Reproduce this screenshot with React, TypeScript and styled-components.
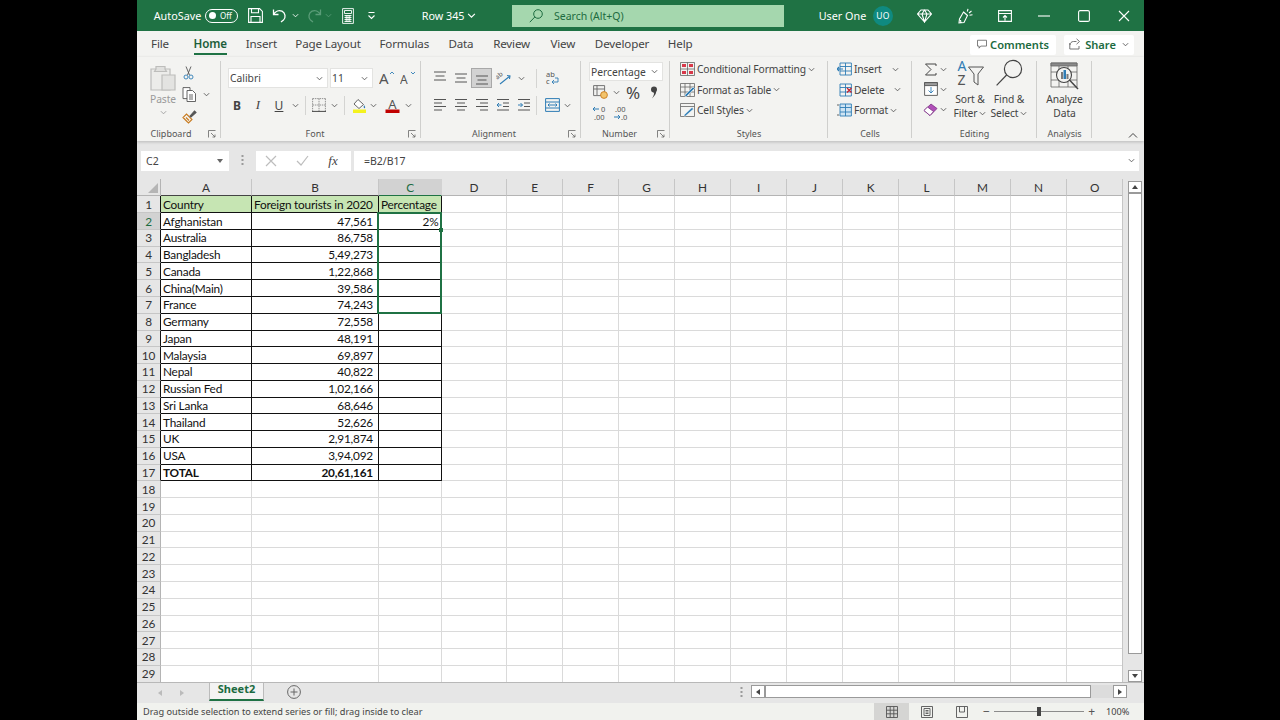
import React from 'react';
import styled, { createGlobalStyle } from 'styled-components';

const GlobalStyle = createGlobalStyle`
  html, body { margin: 0; padding: 0; background: #000; }
  * { box-sizing: border-box; }
  svg { display: block; flex: none; }
`;

const UI_FONT = `"Noto Sans", "Open Sans", sans-serif`;
const CELL_FONT = `Lato, "Noto Sans", sans-serif`;
const GREEN = '#1f7244';

const Page = styled.div`
  width: 1280px;
  height: 720px;
  padding-left: 137px;
  overflow: hidden;
  background: #000;
`;

const Win = styled.div`
  width: 1007px;
  height: 720px;
  display: flex;
  flex-direction: column;
  background: #e6e6e6;
  font-family: ${UI_FONT};
  color: #444;
`;

/* title bar */
const TitleBar = styled.div`
  height: 31px;
  flex: none;
  display: flex;
  align-items: center;
  padding-left: 18px;
  background: ${GREEN};
  color: #fff;
  font-size: 10.8px;
`;

const TitleItem = styled.div<{ $w: number; $ml?: number }>`
  width: ${p => p.$w}px;
  margin-left: ${p => p.$ml ?? 0}px;
  flex: none;
  display: flex;
  align-items: center;
  justify-content: center;
  white-space: nowrap;
`;

const Toggle = styled.div`
  width: 33px;
  height: 14px;
  border: 1px solid #fff;
  border-radius: 7px;
  display: flex;
  align-items: center;
  gap: 4px;
  padding-left: 3px;
  font-size: 8px;
  &::before {
    content: '';
    width: 7px;
    height: 7px;
    border-radius: 50%;
    background: #fff;
  }
`;

const SearchBox = styled.div`
  width: 272px;
  height: 22px;
  margin-left: 36px;
  flex: none;
  display: flex;
  align-items: center;
  gap: 11px;
  padding-left: 17px;
  background: #a5d7ae;
  color: #1d6b40;
  font-size: 10.5px;
`;

const Avatar = styled.div`
  width: 20px;
  height: 20px;
  margin-left: 9px;
  flex: none;
  border-radius: 50%;
  background: #0f8a80;
  display: flex;
  align-items: center;
  justify-content: center;
  font-size: 8.5px;
  letter-spacing: 0.3px;
`;

/* tab row */
const TabRow = styled.div`
  height: 26px;
  flex: none;
  display: flex;
  align-items: flex-start;
  gap: 19.7px;
  padding: 4px 10px 0 15px;
  background: #f3f3f1;
`;

const Tab = styled.div<{ $active?: boolean; $w: number }>`
  width: ${p => p.$w}px;
  height: 20px;
  flex: none;
  display: flex;
  justify-content: center;
  margin-left: ${p => (p.$active ? 6 : 0)}px;
  font-size: 11.6px;
  letter-spacing: -0.15px;
  line-height: 18px;
  white-space: nowrap;
  font-weight: ${p => (p.$active ? 600 : 400)};
  color: ${p => (p.$active ? '#1c5e3a' : '#444')};
  border-bottom: 2px solid ${p => (p.$active ? GREEN : 'transparent')};
`;

const TabActions = styled.div`
  margin-left: auto;
  display: flex;
  gap: 8px;
`;

const ActionButton = styled.div<{ $w: number }>`
  width: ${p => p.$w}px;
  height: 20px;
  display: flex;
  align-items: center;
  justify-content: center;
  gap: 3px;
  padding-bottom: 2px;
  background: #fff;
  border-radius: 2px;
  color: #1c6b41;
  font-size: 11.1px;
  font-weight: 600;
`;

/* ribbon */
const Ribbon = styled.div`
  height: 84px;
  flex: none;
  display: flex;
  position: relative;
  background: #f3f3f1;
  box-shadow: 0 1px 3px rgba(0, 0, 0, 0.2);
`;

const Group = styled.div<{ $w: number }>`
  width: ${p => p.$w}px;
  height: 84px;
  flex: none;
  position: relative;
  display: flex;
  flex-direction: column;
  &::after {
    content: '';
    position: absolute;
    right: 0;
    top: 4px;
    bottom: 3px;
    width: 1px;
    background: #cfcfcd;
  }
`;

const GroupBody = styled.div<{ $pl?: number; $pt?: number }>`
  height: 70px;
  flex: none;
  display: flex;
  overflow: visible;
  padding: ${p => p.$pt ?? 0}px 0 0 ${p => p.$pl ?? 0}px;
`;

const GroupLabel = styled.div<{ $pr?: number }>`
  height: 14px;
  flex: none;
  padding-right: ${p => p.$pr ?? 0}px;
  text-align: center;
  font-size: 9px;
  line-height: 14px;
  color: #555;
`;

const Launcher = styled.div`
  position: absolute;
  right: 5px;
  bottom: 3px;
`;

const Stack = styled.div<{ $gap?: number; $w?: number }>`
  display: flex;
  flex-direction: column;
  gap: ${p => p.$gap ?? 0}px;
  ${p => (p.$w ? `width: ${p.$w}px; flex: none;` : '')}
`;

const Row = styled.div<{ $h?: number }>`
  display: flex;
  align-items: center;
  height: ${p => p.$h ?? 20}px;
`;

const Cell = styled.div<{ $w: number; $on?: boolean; $ml?: number }>`
  width: ${p => p.$w}px;
  height: 100%;
  flex: none;
  margin-left: ${p => p.$ml ?? 0}px;
  display: flex;
  align-items: center;
  justify-content: center;
  font-size: 11px;
  ${p => (p.$on ? 'background: #d2d2d2; border: 1px solid #a8a8a8;' : '')}
`;

const PercentCell = styled(Cell)`
  font-size: 17px;
`;

const FxCell = styled(Cell)`
  font-family: "Liberation Serif", serif;
  font-style: italic;
  font-size: 13px;
`;

const BoldGlyph = styled.span`
  font-weight: 700;
  font-size: 12px;
`;

const ItalicGlyph = styled.span`
  font-family: "Liberation Serif", serif;
  font-style: italic;
  font-size: 13px;
`;

const UnderGlyph = styled.span`
  text-decoration: underline;
  font-size: 12px;
`;

const Divider = styled.div<{ $ml: number; $mr: number }>`
  width: 1px;
  height: 19px;
  flex: none;
  margin: 0 ${p => p.$mr}px 0 ${p => p.$ml}px;
  background: #d4d4d2;
`;

const Combo = styled.div<{ $w: number; $h?: number; $ml?: number }>`
  width: ${p => p.$w}px;
  height: ${p => p.$h ?? 20}px;
  margin-left: ${p => p.$ml ?? 0}px;
  flex: none;
  display: flex;
  align-items: center;
  justify-content: space-between;
  padding: 0 4px 0 1px;
  background: #fff;
  border: 1px solid #e3e3e1;
  font-size: 10.3px;
  color: #444;
`;

const BigLabel = styled.div<{ $mt?: number; $dim?: boolean }>`
  display: flex;
  align-items: center;
  gap: 2px;
  margin-top: ${p => p.$mt ?? 0}px;
  font-size: 10.3px;
  letter-spacing: -0.1px;
  line-height: 14px;
  color: ${p => (p.$dim ? '#9a9a9a' : '#444')};
  white-space: nowrap;
`;

const PasteChev = styled.div`
  margin-top: 3px;
`;

const ListRow = styled.div`
  display: flex;
  align-items: center;
  height: 20px;
  gap: 2px;
  font-size: 10.3px;
  letter-spacing: -0.15px;
  color: #444;
  white-space: nowrap;
`;

const RowChev = styled.div<{ $ml: number }>`
  margin-left: ${p => p.$ml}px;
`;

const Collapse = styled.div`
  position: absolute;
  right: 6px;
  bottom: 2px;
`;

const BigButton = styled.div<{ $w: number }>`
  width: ${p => p.$w}px;
  flex: none;
  display: flex;
  flex-direction: column;
  align-items: center;
`;

/* formula bar */
const FormulaBar = styled.div`
  height: 38px;
  flex: none;
  display: flex;
  align-items: center;
  padding: 1px 5px 0 4px;
  font-size: 10.5px;
`;

const NameBox = styled.div`
  width: 88px;
  height: 20px;
  flex: none;
  display: flex;
  align-items: center;
  justify-content: space-between;
  padding: 0 5px;
  background: #fff;
`;

const BarDots = styled.div`
  width: 27px;
  flex: none;
  display: flex;
  justify-content: center;
`;

const FxBox = styled.div`
  width: 95px;
  height: 20px;
  flex: none;
  display: flex;
  align-items: center;
  background: #fff;
`;

const FormulaInput = styled.div`
  flex: 1;
  height: 20px;
  margin-left: 3px;
  display: flex;
  align-items: center;
  justify-content: space-between;
  padding: 0 4px 0 10px;
  background: #fff;
  font-size: 10.5px;
`;

/* sheet */
const SheetArea = styled.div`
  height: 503px;
  flex: none;
  display: flex;
  background: #fff;
`;

const SheetGrid = styled.div`
  width: 985px;
  height: 503px;
  flex: none;
  position: relative;
  display: grid;
  grid-template-columns: 24px 91px 127px 63px 65px 56px 56px 56px 56px 56px 56px 56px 56px 56px 56px 56px;
  grid-template-rows: 17.4px repeat(29, 16.78px);
  overflow: hidden;
  font-family: ${CELL_FONT};
  font-size: 11.8px;
  letter-spacing: -0.2px;
  color: #111;
`;

const Corner = styled.div`
  background: #e6e6e6;
  border-right: 1px solid #b4b4b4;
  border-bottom: 1px solid #b4b4b4;
  position: relative;
  &::after {
    content: '';
    position: absolute;
    right: 2px;
    bottom: 2px;
    border-style: solid;
    border-width: 0 0 10px 10px;
    border-color: transparent transparent #b5b5b5 transparent;
  }
`;

const ColHead = styled.div<{ $on?: boolean; $boxed?: boolean }>`
  display: flex;
  align-items: center;
  justify-content: center;
  background: ${p => (p.$on ? '#d2d2d2' : '#e6e6e6')};
  color: ${p => (p.$on ? '#1c6b41' : '#333')};
  border-right: 1px solid ${p => (p.$on ? '#d2d2d2' : '#c6c6c6')};
  border-bottom: 1px solid ${p => (p.$on ? GREEN : p.$boxed ? '#444' : '#b4b4b4')};
`;

const RowHead = styled.div<{ $on?: boolean; $edge?: boolean }>`
  display: flex;
  align-items: center;
  justify-content: center;
  background: ${p => (p.$on ? '#d2d2d2' : '#e6e6e6')};
  color: ${p => (p.$on ? '#1c6b41' : '#333')};
  border-right: 1px solid ${p => (p.$edge ? '#111' : '#b4b4b4')};
  border-bottom: 1px solid #c6c6c6;
`;

const DataCell = styled.div<{ $boxed?: boolean; $right?: boolean; $head?: boolean; $bold?: boolean; $tight?: boolean }>`
  display: flex;
  align-items: center;
  justify-content: ${p => (p.$right ? 'flex-end' : 'flex-start')};
  padding: 0 ${p => (p.$tight ? 2.5 : 5)}px 0 2px;
  white-space: nowrap;
  overflow: hidden;
  font-weight: ${p => (p.$bold ? 700 : 400)};
  background: ${p => (p.$head ? '#c6e5b3' : '#fff')};
  border-right: 1px solid ${p => (p.$boxed ? '#111' : '#dadada')};
  border-bottom: 1px solid ${p => (p.$boxed ? '#111' : '#dadada')};
`;

const Selection = styled.div`
  position: absolute;
  left: 240px;
  top: 33px;
  width: 65px;
  height: 102px;
  border: 2px solid ${GREEN};
  pointer-events: none;
  &::after {
    content: '';
    position: absolute;
    right: -3px;
    top: 14px;
    width: 4px;
    height: 4px;
    background: ${GREEN};
  }
`;

const VScroll = styled.div`
  flex: 1;
  display: flex;
  flex-direction: column;
  align-items: center;
  padding: 2px 2px 0 5px;
  background: #e6e6e6;
  border-left: 1px solid #c6c6c6;
`;

const ScrollBtn = styled.div`
  width: 14px;
  height: 12px;
  flex: none;
  display: flex;
  align-items: center;
  justify-content: center;
  background: #fff;
  border: 1px solid #9a9a9a;
`;

const VThumb = styled.div`
  width: 14px;
  height: 461px;
  flex: none;
  background: #fff;
  border: 1px solid #9a9a9a;
`;

const VGap = styled.div`
  flex: 1;
`;

/* bottom */
const SheetTabs = styled.div`
  height: 21px;
  flex: none;
  display: flex;
  align-items: flex-start;
  background: #e6e6e6;
  border-top: 1px solid #b8b8b8;
`;

const TabArrows = styled.div`
  width: 72px;
  height: 20px;
  flex: none;
  display: flex;
  align-items: center;
  gap: 14px;
  padding-left: 19px;
`;

const SheetTab = styled.div`
  width: 55px;
  height: 18px;
  flex: none;
  display: flex;
  align-items: center;
  justify-content: center;
  padding-bottom: 5px;
  background: #f3f3f3;
  color: #1c6b41;
  font-size: 11px;
  font-weight: 700;
  border-left: 1px solid #bbb;
  border-right: 1px solid #bbb;
  border-bottom: 2px solid ${GREEN};
`;

const AddSheet = styled.div`
  margin: 2px 0 0 23px;
`;

const TabDots = styled.div`
  margin: 4px 0 0 439px;
`;

const HScroll = styled.div`
  width: 376px;
  height: 15px;
  margin: 2px 0 0 8px;
  flex: none;
  display: flex;
`;

const HBtn = styled.div`
  width: 14px;
  height: 13px;
  flex: none;
  display: flex;
  align-items: center;
  justify-content: center;
  background: #fff;
  border: 1px solid #9a9a9a;
`;

const HThumb = styled.div`
  width: 326px;
  height: 13px;
  flex: none;
  background: #fff;
  border: 1px solid #9a9a9a;
`;

const HTrack = styled.div`
  flex: 1;
  height: 13px;
  background: #dcdcdc;
`;

const StatusBar = styled.div`
  height: 17px;
  flex: none;
  display: flex;
  align-items: center;
  padding-left: 6px;
  background: #f1f2ee;
  font-size: 9.2px;
  color: #444;
`;

const StatusText = styled.div`
  flex: 1;
`;

const ViewBtn = styled.div<{ $on?: boolean }>`
  width: 35px;
  height: 17px;
  flex: none;
  display: flex;
  align-items: center;
  justify-content: center;
  background: ${p => (p.$on ? '#d5d5d3' : 'transparent')};
`;

const ZoomSlider = styled.div`
  width: 112px;
  margin-left: 4px;
  flex: none;
  display: flex;
  align-items: center;
  gap: 4px;
  font-size: 12px;
  color: #555;
`;

const ZoomTrack = styled.div`
  flex: 1;
  height: 1px;
  background: #8c8c8c;
  position: relative;
  &::after {
    content: '';
    position: absolute;
    left: 43px;
    top: -4px;
    width: 4px;
    height: 9px;
    background: #444;
  }
`;

const ZoomValue = styled.div`
  width: 49px;
  flex: none;
  padding-left: 11px;
  font-size: 9.2px;
`;

/* icons */
const ICON_TEXT = { fontFamily: 'Noto Sans, sans-serif', stroke: 'none' };

const Chev = ({ c = '#555', s = 7 }: { c?: string; s?: number }) => (
  <svg width={s} height={s} viewBox="0 0 8 8"><path d="M1 2.5 4 5.5 7 2.5" fill="none" stroke={c} strokeWidth="1" /></svg>
);

const Launch = () => (
  <svg width="8" height="8" viewBox="0 0 8 8" fill="none" stroke="#666" strokeWidth="0.8">
    <path d="M.5 7.5v-7h7M3 3l4 4M7 4.5V7H4.5" />
  </svg>
);

const W = { fill: 'none', stroke: '#fff', strokeWidth: 1.1 };

const SaveIcon = () => (
  <svg width="15" height="15" viewBox="0 0 15 15" {...W}>
    <path d="M.6.6h11l2.8 2.8v11H.6zM3.5.6v4.2h7V.6M3 14.4V8.5h9v5.9" />
  </svg>
);
const UndoIcon = () => (
  <svg width="15" height="15" viewBox="0 0 15 15" fill="none" stroke="#fff" strokeWidth="1.3">
    <path d="M1.5 1.5v5h5M1.5 6.500C3.500 3 7 1.800 10 3.200c3.500 1.800 4 6.500 1.500 8.800L9 14" />
  </svg>
);
const RedoIcon = () => (
  <svg width="15" height="15" viewBox="0 0 15 15" fill="none" stroke="#5a9c78" strokeWidth="1.3">
    <path d="M13.5 1.5v5h-5M13.500 6.500C11.500 3 8 1.800 5 3.200 1.500 5 1 9.700 3.500 12L6 14" />
  </svg>
);
const CalcIcon = () => (
  <svg width="12" height="16" viewBox="0 0 12 16" fill="none" stroke="#fff" strokeWidth="0.9">
    <path d="M.6.6h10.800v14.800H.6zM2.500 2.500h7v3h-7zM2.500 7.500h7M2.500 9.500h7M2.500 11.500h7M2.500 13.500h7M4.200 7v7M6 7v7M7.800 7v7" />
  </svg>
);
const QatMore = () => (
  <svg width="9" height="9" viewBox="0 0 9 9" {...W}>
    <path d="M1.500 1.500h6M1.500 4.500 4.500 7.500 7.500 4.500" />
  </svg>
);
const SearchIcon = ({ c = '#1d6b40', s = 14 }: { c?: string; s?: number }) => (
  <svg width={s} height={s} viewBox="0 0 14 14" fill="none" stroke={c} strokeWidth={s > 20 ? 0.6 : 1}>
    <circle cx="9" cy="5" r="4.300" /><path d="M5.800 8 .8 13.200" />
  </svg>
);
const GemIcon = () => (
  <svg width="15" height="14" viewBox="0 0 15 14" {...W}>
    <path d="M4 1h7l3.400 4L7.500 13 .6 5zM.6 5h13.800M5 5l2.500 8L10 5 7.500 1 5 5" />
  </svg>
);
const PenIcon = () => (
  <svg width="15" height="16" viewBox="0 0 15 16" {...W}>
    <path d="M5.500 4 9.500 7.500 6 14.500 1 15 1.500 11zM3 15l-.5-3M10 .8 9.300 3.500M13.500 3 11 5M14.500 6.800l-3 .4" />
  </svg>
);
const DisplayIcon = () => (
  <svg width="14" height="12" viewBox="0 0 14 12" {...W}>
    <path d="M.6.6h12.800v10.800H.6zM.6 3.500h12.800M7 10.500V5.500M5 7.500l2-2 2 2" />
  </svg>
);
const MinIcon = () => <svg width="12" height="12" viewBox="0 0 12 12" {...W}><path d="M0 6h12" /></svg>;
const MaxIcon = () => <svg width="12" height="12" viewBox="0 0 12 12" {...W}><rect x=".6" y=".6" width="10.800" height="10.800" rx="1.500" /></svg>;
const CloseIcon = () => <svg width="12" height="12" viewBox="0 0 12 12" {...W}><path d="M1 1l10 10M11 1 1 11" /></svg>;

const CommentIcon = () => (
  <svg width="10" height="10" viewBox="0 0 12 12" fill="none" stroke="#666" strokeWidth="1">
    <path d="M.6 1.500h10.800v7H4.500L2.500 11V8.500H.6z" />
  </svg>
);
const ShareIcon = () => (
  <svg width="13" height="12" viewBox="0 0 13 12" fill="none" stroke="#666" strokeWidth="0.9">
    <path d="M7.500 3.500h-3C2.500 3.500 1 5 1 7M7.500 .8l3 2.700-3 2.700M10 8v3H.8V5" />
  </svg>
);

const PasteIcon = () => (
  <svg width="28" height="28" viewBox="0 0 28 28" fill="#ececea" stroke="#bdbdbb" strokeWidth="1.200">
    <path d="M2 5h19v21H2z" /><path d="M7 5V2.500h9V5l1.500 2.500h-12z" fill="#e0e0de" />
    <path d="M13 11h13v15H13z" fill="#e3e3e1" />
  </svg>
);
const ScissorsIcon = () => (
  <svg width="11" height="14" viewBox="0 0 11 14" fill="none" stroke="#555" strokeWidth="0.9">
    <path d="M3 .5 6.500 9M8 .5 4.500 9" /><circle cx="3" cy="11" r="2" stroke="#2f7db5" /><circle cx="8" cy="11" r="2" stroke="#2f7db5" />
  </svg>
);
const CopyIcon = () => (
  <svg width="14" height="15" viewBox="0 0 14 15" fill="#fff" stroke="#555" strokeWidth="0.9">
    <path d="M1 .6h7v11H1z" /><path d="M5 3.500h5.500l3 3v8H5zM7 8h4M7 10h4M7 12h4" />
  </svg>
);
const PainterIcon = () => (
  <svg width="15" height="15" viewBox="0 0 15 15" fill="none" stroke="#c87a1e" strokeWidth="1.100">
    <path d="M1 8.500 6.500 14 10 10.500 4.500 5zM2.500 10l3 3M4 8.500l3 3" /><path d="M8 7l4.500-5 1.500 1.500-5 4.500z" fill="#555" stroke="#555" />
  </svg>
);

const GrowFont = ({ size, up }: { size: number; up?: boolean }) => (
  <svg width="16" height="16" viewBox="0 0 16 16" fill="none">
    <text x="0" y="14" fontSize={size} fill="#555" style={ICON_TEXT}>A</text>
    <path d={up ? 'M11 4l2-2 2 2' : 'M11 2l2 2 2-2'} stroke="#2f7db5" strokeWidth="0.9" />
  </svg>
);
const BorderIcon = () => (
  <svg width="14" height="14" viewBox="0 0 14 14" fill="none" stroke="#888" strokeWidth="0.9" strokeDasharray="1.500 0.800">
    <path d="M.6.6h12.800M.6.6v12.800M13.400.6v12.800M7 .6v12.800M.6 7h12.800" /><path d="M0 13.400h14" stroke="#333" strokeDasharray="none" />
  </svg>
);
const FillIcon = () => (
  <svg width="15" height="15" viewBox="0 0 15 15">
    <path d="M6 1.500 11.500 6.500 7 10.500 2 6z" fill="#fff" stroke="#555" strokeWidth="0.9" /><path d="M12 7c1 1.500 1.500 2 1 3-.8.8-1.800 0-1-3z" fill="#2f7db5" />
    <path d="M1 11.500h13V15H1z" fill="#f4f21e" />
  </svg>
);
const FontColorIcon = () => (
  <svg width="15" height="15" viewBox="0 0 15 15" fill="none">
    <text x="7.500" y="10.500" textAnchor="middle" fontSize="13" fill="#555" style={ICON_TEXT}>A</text>
    <path d="M.5 11.500h14V15H.5z" fill="#c00000" />
  </svg>
);
const VAlign = ({ top }: { top: number }) => (
  <svg width="14" height="14" viewBox="0 0 14 14" fill="none" stroke="#555" strokeWidth="1">
    <path d={`M1 ${top}H13M2.500 ${top + 4}H11.500M1 ${top + 8}H13`} />
  </svg>
);
const AlignSide = ({ side }: { side: 'l' | 'c' | 'r' }) => {
  const x = { l: 1, c: 3, r: 5 }[side];
  return (
    <svg width="14" height="14" viewBox="0 0 14 14" fill="none" stroke="#555" strokeWidth="1">
      <path d={`M1 1.500h12M${x} 5h8M1 8.500h12M${x} 12h8`} />
    </svg>
  );
};
const Indent = ({ out }: { out?: boolean }) => (
  <svg width="14" height="14" viewBox="0 0 14 14" fill="none" stroke="#555" strokeWidth="1">
    <path d="M1 1.500h12M7 5h6M7 8.500h6M1 12h12" />
    <path d={out ? 'M5.500 7H1M3 5l-2 2 2 2' : 'M1 7h4.500M3.500 5l2 2-2 2'} stroke="#2f7db5" />
  </svg>
);
const OrientIcon = () => (
  <svg width="16" height="15" viewBox="0 0 16 15" fill="none">
    <text x="0" y="7" fontSize="6.500" fill="#555" transform="rotate(-40 3 6)" style={ICON_TEXT}>ab</text>
    <path d="M4 13 14 5M11 4.500l3 .5-.5 3" stroke="#2f7db5" strokeWidth="1.100" />
  </svg>
);
const WrapIcon = () => (
  <svg width="15" height="16" viewBox="0 0 15 16" fill="none">
    <text x="1" y="6.500" fontSize="7.500" fill="#555" style={ICON_TEXT}>ab</text>
    <text x="1" y="14" fontSize="7.500" fill="#555" style={ICON_TEXT}>c</text>
    <path d="M10 8h3v4H7M9 10l-2 2 2 2" stroke="#2f7db5" strokeWidth="0.9" />
  </svg>
);
const MergeIcon = () => (
  <svg width="15" height="14" viewBox="0 0 15 14" fill="none" stroke="#2f7db5" strokeWidth="1">
    <path d="M.6.6h13.800v12.800H.6zM.6 4h13.800M.6 10h13.800M3 7h9M4.500 5.500 3 7l1.500 1.500M10.500 5.500 12 7l-1.500 1.500" />
  </svg>
);
const NumFormatIcon = () => (
  <svg width="15" height="14" viewBox="0 0 15 14" fill="none" stroke="#666" strokeWidth="0.9">
    <path d="M.6.6h11v10H.6zM.6 4h11M4 .6V10" /><ellipse cx="11" cy="10" rx="3.400" ry="3.400" fill="#f2c36b" stroke="#c87a1e" />
  </svg>
);
const CommaIcon = () => (
  <svg width="8" height="13" viewBox="0 0 8 13" fill="#444">
    <circle cx="4" cy="3.500" r="3" /><path d="M4.500 4.500C7 4.500 7 8 2 12.500 4 9 4.500 7.500 3.500 6z" />
  </svg>
);
const DecIncIcon = () => (
  <svg width="15" height="16" viewBox="0 0 15 16" fill="none" stroke="#2f7db5" strokeWidth="1">
    <path d="M7 4H1M3 2 1 4l2 2" />
    <text x="9" y="7" fontSize="7.500" fill="#555" style={ICON_TEXT}>0</text>
    <text x="2" y="15" fontSize="7.500" fill="#555" style={ICON_TEXT}>.00</text>
  </svg>
);
const DecDecIcon = () => (
  <svg width="15" height="16" viewBox="0 0 15 16" fill="none" stroke="#2f7db5" strokeWidth="1">
    <path d="M1 12h6M5 10l2 2-2 2" />
    <text x="2" y="7" fontSize="7.500" fill="#555" style={ICON_TEXT}>.00</text>
    <text x="8" y="15" fontSize="7.500" fill="#555" style={ICON_TEXT}>.0</text>
  </svg>
);
const CondIcon = () => (
  <svg width="15" height="14" viewBox="0 0 15 14" fill="none" stroke="#666" strokeWidth="0.8">
    <path d="M.5.500h14v13H.5z" /><path d="M2 2h4v3H2zM9 2h4v3H9zM2 9h4v3H2zM9 9h4v3H9z" fill="#d8394a" stroke="none" /><path d="M.5 7h14M7.500.500v13" />
  </svg>
);
const TableIcon = () => (
  <svg width="15" height="14" viewBox="0 0 15 14" fill="none" stroke="#666" strokeWidth="0.8">
    <path d="M.5.500h14v13H.5zM.5 4h14M.5 9h14M5 .500v13M10 .500v13" /><path d="M5 12 13 4l1.500 1.500-8 8H5z" fill="#2f7db5" stroke="#fff" strokeWidth="0.500" />
  </svg>
);
const StylesIcon = () => (
  <svg width="15" height="14" viewBox="0 0 15 14" fill="none" stroke="#666" strokeWidth="0.8">
    <path d="M.5.500h14v13H.5zM.5 3.500h14" /><path d="M4 12 12 4.500l1.500 1.500-8 7H4z" fill="#2f7db5" stroke="#fff" strokeWidth="0.500" />
  </svg>
);
const CellIcon = ({ kind }: { kind: 'insert' | 'delete' | 'format' }) => (
  <svg width="15" height="14" viewBox="0 0 15 14" fill="none" stroke="#2f7db5" strokeWidth="0.9">
    <path d="M3 1h11.400v12H3zM3 4.500h11.400M3 9h11.400M8.500 1v12" fill={kind === 'format' ? '#cfe4f3' : 'none'} />
    {kind === 'insert' && <path d="M6 7H0M2 5 0 7l2 2" stroke="#2f7db5" strokeWidth="1.100" />}
    {kind === 'delete' && <path d="M10 5l4.500 4.500M14.500 5 10 9.500" stroke="#c8202d" strokeWidth="1.200" />}
    {kind === 'format' && <path d="M0 2h2M0 12h2" stroke="#555" />}
  </svg>
);
const SumIcon = () => (
  <svg width="13" height="13" viewBox="0 0 13 13" fill="none" stroke="#444" strokeWidth="1">
    <path d="M12 3V1H1.500L7 6.500 1.500 12H12v-2" />
  </svg>
);
const FillDownIcon = () => (
  <svg width="14" height="14" viewBox="0 0 14 14" fill="#fff" stroke="#555" strokeWidth="0.9">
    <path d="M.6 .6h12.800v12.800H.6z" /><path d="M.6 .6h12.800v3H.6z" fill="#9c9c9c" /><path d="M7 5v6M4.500 8.500 7 11l2.500-2.500" fill="none" stroke="#2f7db5" />
  </svg>
);
const EraserIcon = () => (
  <svg width="15" height="13" viewBox="0 0 15 13">
    <path d="M1 7.500 8 1l6 4.500-7 7z" fill="#b04fb8" stroke="#7c3085" strokeWidth="0.800" /><path d="M1 7.500 4.500 4l6 4.500-3.500 4z" fill="#fff" stroke="#7c3085" strokeWidth="0.800" />
  </svg>
);
const SortFilterIcon = () => (
  <svg width="27" height="28" viewBox="0 0 27 28" fill="none">
    <text x="0.500" y="12" fontSize="14" fill="#2f7db5" style={ICON_TEXT}>A</text>
    <text x="0.500" y="26" fontSize="14" fill="#555" style={ICON_TEXT}>Z</text>
    <path d="M11.500 8h15l-5.500 7v11l-4-3v-8z" stroke="#555" strokeWidth="1" />
  </svg>
);
const AnalyzeIcon = () => (
  <svg width="30" height="30" viewBox="0 0 30 30" fill="none" stroke="#666" strokeWidth="0.8">
    <path d="M1 1h26v24H1z" /><path d="M1 1h26v3H1z" fill="#8a8a8a" /><path d="M1 10h26M1 18h26M9 4v21M18 4v21" />
    <circle cx="14" cy="13" r="7.500" fill="#f3f3f1" stroke="#444" strokeWidth="1.100" />
    <path d="M11 10h2v7h-2z" fill="#7b7b7b" stroke="none" /><path d="M13.500 8h2.500v9h-2.500z" fill="#2f7db5" stroke="none" /><path d="M16.500 12h2v5h-2z" fill="#7b7b7b" stroke="none" />
    <path d="M19.500 18 28 27" stroke="#444" strokeWidth="1.500" />
  </svg>
);
const CrossIcon = () => <svg width="12" height="12" viewBox="0 0 12 12" fill="none" stroke="#bdbdbd" strokeWidth="1.200"><path d="M1 1l10 10M11 1 1 11" /></svg>;
const CheckIcon = () => <svg width="13" height="11" viewBox="0 0 13 11" fill="none" stroke="#bdbdbd" strokeWidth="1.200"><path d="M1 6l4 4 7-9" /></svg>;
const Dots = () => (
  <svg width="3" height="11" viewBox="0 0 3 11" fill="#9a9a9a"><rect width="2" height="2" x=".5" y="0" /><rect width="2" height="2" x=".5" y="4" /><rect width="2" height="2" x=".5" y="8" /></svg>
);
const Tri = ({ dir, c = '#444' }: { dir: 'u' | 'd' | 'l' | 'r'; c?: string }) => {
  const pts = { u: '1,6 4,2 7,6', d: '1,2 4,6 7,2', l: '6,1 2,4 6,7', r: '2,1 6,4 2,7' }[dir];
  return <svg width="8" height="8" viewBox="0 0 8 8"><polygon points={pts} fill={c} /></svg>;
};
const PlusCircle = () => (
  <svg width="14" height="14" viewBox="0 0 14 14" fill="none" stroke="#666" strokeWidth="1">
    <circle cx="7" cy="7" r="6.400" /><path d="M7 3.500v7M3.500 7h7" />
  </svg>
);
const ViewNormal = () => (
  <svg width="12" height="12" viewBox="0 0 12 12" fill="none" stroke="#555" strokeWidth="0.9"><path d="M.5.500h11v11H.5zM.5 4.200h11M.5 7.800h11M4.200.500v11M7.800.500v11" /></svg>
);
const ViewLayout = () => (
  <svg width="12" height="12" viewBox="0 0 12 12" fill="none" stroke="#555" strokeWidth="0.9"><path d="M.5.500h11v11H.5zM3 2.500h6v7H3zM4.500 4.500h3M4.500 6h3M4.500 7.500h3" /></svg>
);
const ViewBreak = () => (
  <svg width="12" height="12" viewBox="0 0 12 12" fill="none" stroke="#555" strokeWidth="0.9"><path d="M.5.500h11v11H.5zM3.500.500v5.500h5V.500" /></svg>
);

const COLS = ['A', 'B', 'C', 'D', 'E', 'F', 'G', 'H', 'I', 'J', 'K', 'L', 'M', 'N', 'O'];

const ROWS: [string, string][] = [
  ['Afghanistan', '47,561'],
  ['Australia', '86,758'],
  ['Bangladesh', '5,49,273'],
  ['Canada', '1,22,868'],
  ['China(Main)', '39,586'],
  ['France', '74,243'],
  ['Germany', '72,558'],
  ['Japan', '48,191'],
  ['Malaysia', '69,897'],
  ['Nepal', '40,822'],
  ['Russian Fed', '1,02,166'],
  ['Sri Lanka', '68,646'],
  ['Thailand', '52,626'],
  ['UK', '2,91,874'],
  ['USA', '3,94,092'],
];

const TABS: [string, number][] = [
  ['File', 16], ['Home', 33], ['Insert', 30], ['Page Layout', 64], ['Formulas', 49],
  ['Data', 25], ['Review', 37], ['View', 26], ['Developer', 53], ['Help', 24],
];

const SheetRow = ({ n }: { n: number }) => {
  const data = n >= 2 && n <= 16 ? ROWS[n - 2] : null;
  return (
    <>
      <RowHead $on={n === 2} $edge={n <= 17}>{n}</RowHead>
      {COLS.map((c, i) => {
        const boxed = i < 3 && n <= 17;
        if (n === 1 && i < 3) {
          const text = ['Country', 'Foreign tourists in 2020', 'Percentage'][i];
          return <DataCell key={c} $boxed $head>{text}</DataCell>;
        }
        if (n === 17 && i < 2) {
          return <DataCell key={c} $boxed $bold $right={i === 1}>{i === 0 ? 'TOTAL' : '20,61,161'}</DataCell>;
        }
        if (data && i < 2) {
          return <DataCell key={c} $boxed $right={i === 1}>{data[i]}</DataCell>;
        }
        if (n === 2 && i === 2) {
          return <DataCell key={c} $boxed $right $tight>2%</DataCell>;
        }
        return <DataCell key={c} $boxed={boxed} />;
      })}
    </>
  );
};

export default function App() {
  const rowNums = Array.from({ length: 29 }, (_, i) => i + 1);
  return (
    <Page>
      <GlobalStyle />
      <Win>
        <TitleBar>
          <TitleItem $w={45}>AutoSave</TitleItem>
          <TitleItem $w={33} $ml={5}><Toggle>Off</Toggle></TitleItem>
          <TitleItem $w={15} $ml={10}><SaveIcon /></TitleItem>
          <TitleItem $w={15} $ml={9}><UndoIcon /></TitleItem>
          <TitleItem $w={8} $ml={4}><Chev c="#fff" /></TitleItem>
          <TitleItem $w={15} $ml={8}><RedoIcon /></TitleItem>
          <TitleItem $w={8} $ml={2}><Chev c="#5a9c78" /></TitleItem>
          <TitleItem $w={12} $ml={10}><CalcIcon /></TitleItem>
          <TitleItem $w={9} $ml={13}><QatMore /></TitleItem>
          <TitleItem $w={54} $ml={46}>Row 345&nbsp;<Chev c="#fff" s={9} /></TitleItem>
          <SearchBox><SearchIcon />Search (Alt+Q)</SearchBox>
          <TitleItem $w={43} $ml={37}>User One</TitleItem>
          <Avatar>UO</Avatar>
          <TitleItem $w={15} $ml={24}><GemIcon /></TitleItem>
          <TitleItem $w={15} $ml={26}><PenIcon /></TitleItem>
          <TitleItem $w={14} $ml={25}><DisplayIcon /></TitleItem>
          <TitleItem $w={12} $ml={26}><MinIcon /></TitleItem>
          <TitleItem $w={12} $ml={28}><MaxIcon /></TitleItem>
          <TitleItem $w={12} $ml={28}><CloseIcon /></TitleItem>
        </TitleBar>

        <TabRow>
          {TABS.map(([t, w]) => (
            <Tab key={t} $w={w} $active={t === 'Home'}>{t}</Tab>
          ))}
          <TabActions>
            <ActionButton $w={86}><CommentIcon />Comments</ActionButton>
            <ActionButton $w={70}><ShareIcon />Share&nbsp;<Chev /></ActionButton>
          </TabActions>
        </TabRow>

        <Ribbon>
          <Group $w={84}>
            <GroupBody $pl={12} $pt={7}>
              <BigButton $w={28}>
                <PasteIcon />
                <BigLabel $dim>Paste</BigLabel>
                <PasteChev><Chev c="#9a9a9a" /></PasteChev>
              </BigButton>
              <Stack $w={38} $gap={2}>
                <Row $h={19}><Cell $w={22}><ScissorsIcon /></Cell></Row>
                <Row $h={21}><Cell $w={24}><CopyIcon /></Cell><Cell $w={10}><Chev /></Cell></Row>
                <Row $h={21}><Cell $w={24}><PainterIcon /></Cell></Row>
              </Stack>
            </GroupBody>
            <GroupLabel $pr={16}>Clipboard</GroupLabel>
            <Launcher><Launch /></Launcher>
          </Group>

          <Group $w={200}>
            <GroupBody $pl={7} $pt={11}>
              <Stack $gap={7}>
                <Row>
                  <Combo $w={100}>Calibri<Chev /></Combo>
                  <Combo $w={43} $ml={2}>11<Chev /></Combo>
                  <Cell $w={20} $ml={4}><GrowFont size={15} up /></Cell>
                  <Cell $w={21}><GrowFont size={12} /></Cell>
                </Row>
                <Row>
                  <Cell $w={18}><BoldGlyph>B</BoldGlyph></Cell>
                  <Cell $w={24}><ItalicGlyph>I</ItalicGlyph></Cell>
                  <Cell $w={18}><UnderGlyph>U</UnderGlyph></Cell>
                  <Cell $w={14}><Chev /></Cell>
                  <Divider $ml={3} $mr={3} />
                  <Cell $w={19}><BorderIcon /></Cell>
                  <Cell $w={12}><Chev /></Cell>
                  <Divider $ml={4} $mr={4} />
                  <Cell $w={20}><FillIcon /></Cell>
                  <Cell $w={9}><Chev /></Cell>
                  <Cell $w={20} $ml={4}><FontColorIcon /></Cell>
                  <Cell $w={12}><Chev /></Cell>
                </Row>
              </Stack>
            </GroupBody>
            <GroupLabel $pr={12}>Font</GroupLabel>
            <Launcher><Launch /></Launcher>
          </Group>

          <Group $w={160}>
            <GroupBody $pl={8} $pt={11}>
              <Stack $gap={7}>
                <Row>
                  <Cell $w={21}><VAlign top={1} /></Cell>
                  <Cell $w={21}><VAlign top={3} /></Cell>
                  <Cell $w={21} $on><VAlign top={5} /></Cell>
                  <Cell $w={24}><OrientIcon /></Cell>
                  <Cell $w={10}><Chev /></Cell>
                  <Divider $ml={10} $mr={7} />
                  <Cell $w={16}><WrapIcon /></Cell>
                </Row>
                <Row>
                  <Cell $w={21}><AlignSide side="l" /></Cell>
                  <Cell $w={21}><AlignSide side="c" /></Cell>
                  <Cell $w={21}><AlignSide side="r" /></Cell>
                  <Cell $w={21}><Indent out /></Cell>
                  <Cell $w={21}><Indent /></Cell>
                  <Divider $ml={2} $mr={7} />
                  <Cell $w={16}><MergeIcon /></Cell>
                  <Cell $w={14}><Chev /></Cell>
                </Row>
              </Stack>
            </GroupBody>
            <GroupLabel $pr={14}>Alignment</GroupLabel>
            <Launcher><Launch /></Launcher>
          </Group>

          <Group $w={89}>
            <GroupBody $pl={8} $pt={5}>
              <Stack>
                <Combo $w={74} $h={19}>Percentage<Chev /></Combo>
                <Row $h={22}>
                  <Cell $w={22}><NumFormatIcon /></Cell>
                  <Cell $w={10}><Chev /></Cell>
                  <PercentCell $w={24}>%</PercentCell>
                  <Cell $w={18}><CommaIcon /></Cell>
                </Row>
                <Row $h={19}>
                  <Cell $w={21}><DecIncIcon /></Cell>
                  <Cell $w={21}><DecDecIcon /></Cell>
                </Row>
              </Stack>
            </GroupBody>
            <GroupLabel $pr={12}>Number</GroupLabel>
            <Launcher><Launch /></Launcher>
          </Group>

          <Group $w={158}>
            <GroupBody $pl={10} $pt={2}>
              <Stack $gap={0.5}>
                <ListRow><CondIcon />Conditional Formatting<Chev /></ListRow>
                <ListRow><TableIcon />Format as Table<Chev /></ListRow>
                <ListRow><StylesIcon />Cell Styles<Chev /></ListRow>
              </Stack>
            </GroupBody>
            <GroupLabel>Styles</GroupLabel>
          </Group>

          <Group $w={84}>
            <GroupBody $pl={9} $pt={2}>
              <Stack $gap={0.5}>
                <ListRow><CellIcon kind="insert" />Insert<RowChev $ml={8}><Chev /></RowChev></ListRow>
                <ListRow><CellIcon kind="delete" />Delete<RowChev $ml={8}><Chev /></RowChev></ListRow>
                <ListRow><CellIcon kind="format" />Format<Chev /></ListRow>
              </Stack>
            </GroupBody>
            <GroupLabel>Cells</GroupLabel>
          </Group>

          <Group $w={125}>
            <GroupBody $pl={10} $pt={2}>
              <Stack $w={31}>
                <Row $h={20}><Cell $w={17}><SumIcon /></Cell><Cell $w={9}><Chev /></Cell></Row>
                <Row $h={20}><Cell $w={17}><FillDownIcon /></Cell><Cell $w={9}><Chev /></Cell></Row>
                <Row $h={20}><Cell $w={17}><EraserIcon /></Cell><Cell $w={9}><Chev /></Cell></Row>
              </Stack>
              <BigButton $w={34}>
                <SortFilterIcon />
                <BigLabel $mt={5}>Sort &amp;</BigLabel>
                <BigLabel>Filter <Chev /></BigLabel>
              </BigButton>
              <BigButton $w={44}>
                <SearchIcon c="#444" s={28} />
                <BigLabel $mt={5}>Find &amp;</BigLabel>
                <BigLabel>Select <Chev /></BigLabel>
              </BigButton>
            </GroupBody>
            <GroupLabel>Editing</GroupLabel>
          </Group>

          <Group $w={55}>
            <GroupBody $pt={5}>
              <BigButton $w={55}>
                <AnalyzeIcon />
                <BigLabel>Analyze</BigLabel>
                <BigLabel>Data</BigLabel>
              </BigButton>
            </GroupBody>
            <GroupLabel>Analysis</GroupLabel>
          </Group>

          <Collapse><svg width="10" height="7" viewBox="0 0 10 7" fill="none" stroke="#444"><path d="M1 5.500 5 1.500l4 4" /></svg></Collapse>
        </Ribbon>

        <FormulaBar>
          <NameBox>C2<Tri dir="d" c="#666" /></NameBox>
          <BarDots><Dots /></BarDots>
          <FxBox>
            <Cell $w={30}><CrossIcon /></Cell>
            <Cell $w={32}><CheckIcon /></Cell>
            <FxCell $w={30}>fx</FxCell>
          </FxBox>
          <FormulaInput>=B2/B17<Chev /></FormulaInput>
        </FormulaBar>

        <SheetArea>
          <SheetGrid>
            <Corner />
            {COLS.map((c, i) => <ColHead key={c} $on={c === 'C'} $boxed={i < 2}>{c}</ColHead>)}
            {rowNums.map(n => <SheetRow key={n} n={n} />)}
            <Selection />
          </SheetGrid>
          <VScroll>
            <ScrollBtn><Tri dir="u" /></ScrollBtn>
            <VThumb />
            <VGap />
            <ScrollBtn><Tri dir="d" /></ScrollBtn>
          </VScroll>
        </SheetArea>

        <SheetTabs>
          <TabArrows><Tri dir="l" c="#bbb" /><Tri dir="r" c="#bbb" /></TabArrows>
          <SheetTab>Sheet2</SheetTab>
          <AddSheet><PlusCircle /></AddSheet>
          <TabDots><Dots /></TabDots>
          <HScroll>
            <HBtn><Tri dir="l" /></HBtn>
            <HThumb />
            <HTrack />
            <HBtn><Tri dir="r" /></HBtn>
          </HScroll>
        </SheetTabs>

        <StatusBar>
          <StatusText>Drag outside selection to extend series or fill; drag inside to clear</StatusText>
          <ViewBtn $on><ViewNormal /></ViewBtn>
          <ViewBtn><ViewLayout /></ViewBtn>
          <ViewBtn><ViewBreak /></ViewBtn>
          <ZoomSlider>−<ZoomTrack />+</ZoomSlider>
          <ZoomValue>100%</ZoomValue>
        </StatusBar>
      </Win>
    </Page>
  );
}
